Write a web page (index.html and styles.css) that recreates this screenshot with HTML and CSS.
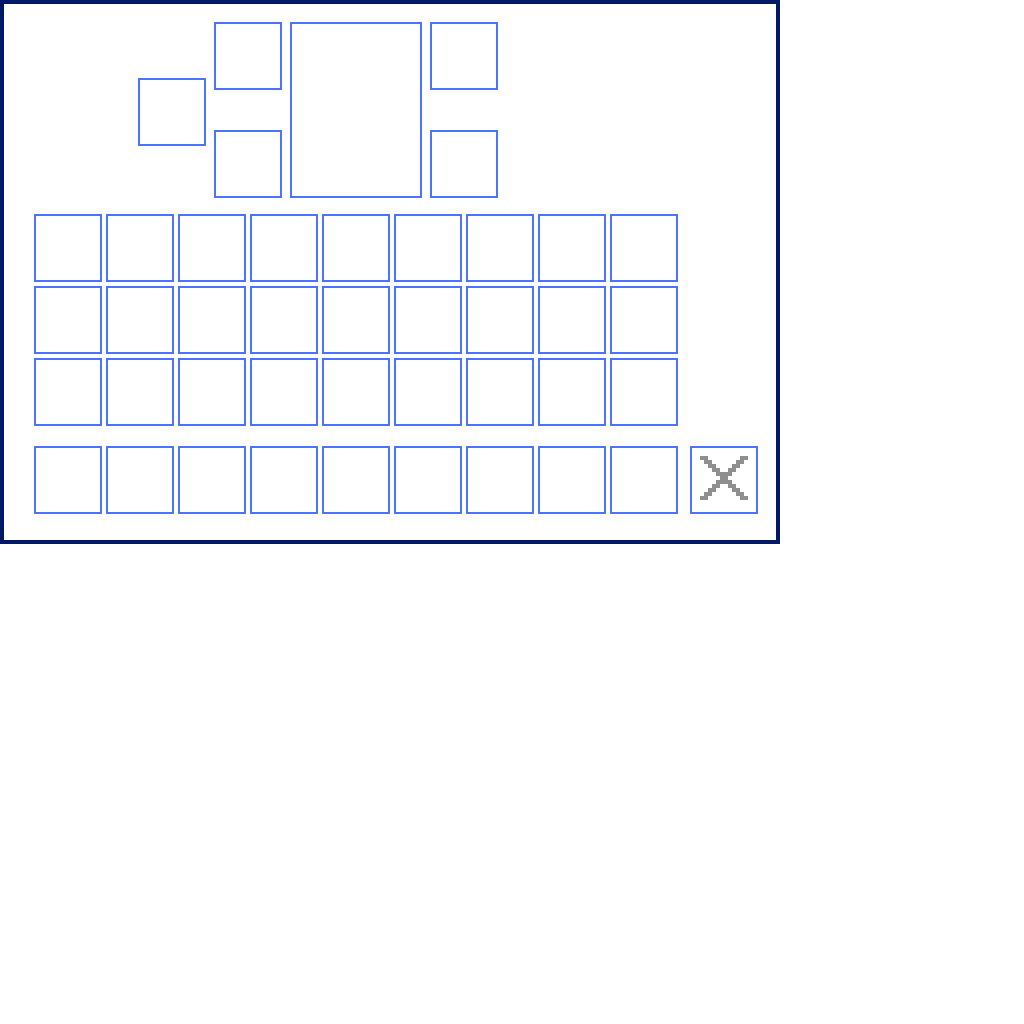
FILE: index.html
```html
<!DOCTYPE html>
<html>
<head>
<meta charset="utf-8">
<link rel="stylesheet" href="styles.css">
</head>
<body>
<div class="inventory">
  <div class="equip">
    <div class="slot offhand"></div>
    <div class="col">
      <div class="slot"></div>
      <div class="slot"></div>
    </div>
    <div class="slot preview"></div>
    <div class="col">
      <div class="slot"></div>
      <div class="slot"></div>
    </div>
  </div>
  <div class="grid">
    <div class="slot"></div><div class="slot"></div><div class="slot"></div><div class="slot"></div><div class="slot"></div><div class="slot"></div><div class="slot"></div><div class="slot"></div><div class="slot"></div>
    <div class="slot"></div><div class="slot"></div><div class="slot"></div><div class="slot"></div><div class="slot"></div><div class="slot"></div><div class="slot"></div><div class="slot"></div><div class="slot"></div>
    <div class="slot"></div><div class="slot"></div><div class="slot"></div><div class="slot"></div><div class="slot"></div><div class="slot"></div><div class="slot"></div><div class="slot"></div><div class="slot"></div>
  </div>
  <div class="hotbar">
    <div class="slot"></div><div class="slot"></div><div class="slot"></div><div class="slot"></div><div class="slot"></div><div class="slot"></div><div class="slot"></div><div class="slot"></div><div class="slot"></div>
    <div class="slot trash">
      <svg width="48" height="44" viewBox="0 0 48 44" shape-rendering="crispEdges" fill="#8f8f8f">
        <rect x="0" y="0" width="8" height="4"/>
        <rect x="4" y="4" width="8" height="4"/>
        <rect x="8" y="8" width="8" height="4"/>
        <rect x="12" y="12" width="8" height="4"/>
        <rect x="16" y="16" width="8" height="4"/>
        <rect x="20" y="20" width="8" height="4"/>
        <rect x="24" y="24" width="8" height="4"/>
        <rect x="28" y="28" width="8" height="4"/>
        <rect x="32" y="32" width="8" height="4"/>
        <rect x="36" y="36" width="8" height="4"/>
        <rect x="40" y="40" width="8" height="4"/>
        <rect x="40" y="0" width="8" height="4"/>
        <rect x="36" y="4" width="8" height="4"/>
        <rect x="32" y="8" width="8" height="4"/>
        <rect x="28" y="12" width="8" height="4"/>
        <rect x="24" y="16" width="8" height="4"/>
        <rect x="20" y="20" width="8" height="4"/>
        <rect x="16" y="24" width="8" height="4"/>
        <rect x="12" y="28" width="8" height="4"/>
        <rect x="8" y="32" width="8" height="4"/>
        <rect x="4" y="36" width="8" height="4"/>
        <rect x="0" y="40" width="8" height="4"/>
      </svg>
    </div>
  </div>
</div>
</body>
</html>
```
FILE: styles.css
```css
html, body {
  margin: 0;
  padding: 0;
  background: #ffffff;
}
.inventory {
  box-sizing: border-box;
  width: 780px;
  height: 544px;
  border: 4px solid #001966;
  padding: 18px 0 0 30px;
  display: flex;
  flex-direction: column;
}
.slot {
  box-sizing: border-box;
  width: 68px;
  height: 68px;
  border: 2px solid #4a74ff;
}
.equip {
  display: flex;
  gap: 8px;
  margin-left: 104px;
  height: 176px;
}
.offhand {
  margin-top: 56px;
}
.col {
  display: flex;
  flex-direction: column;
  justify-content: space-between;
}
.preview {
  width: 132px;
  height: 176px;
}
.grid {
  margin-top: 16px;
  display: grid;
  grid-template-columns: repeat(9, 68px);
  gap: 4px;
}
.hotbar {
  margin-top: 20px;
  display: flex;
  gap: 4px;
}
.trash {
  margin-left: 8px;
  display: flex;
  align-items: center;
  justify-content: center;
}
.trash svg {
  display: block;
  margin-bottom: 4px;
}
```
